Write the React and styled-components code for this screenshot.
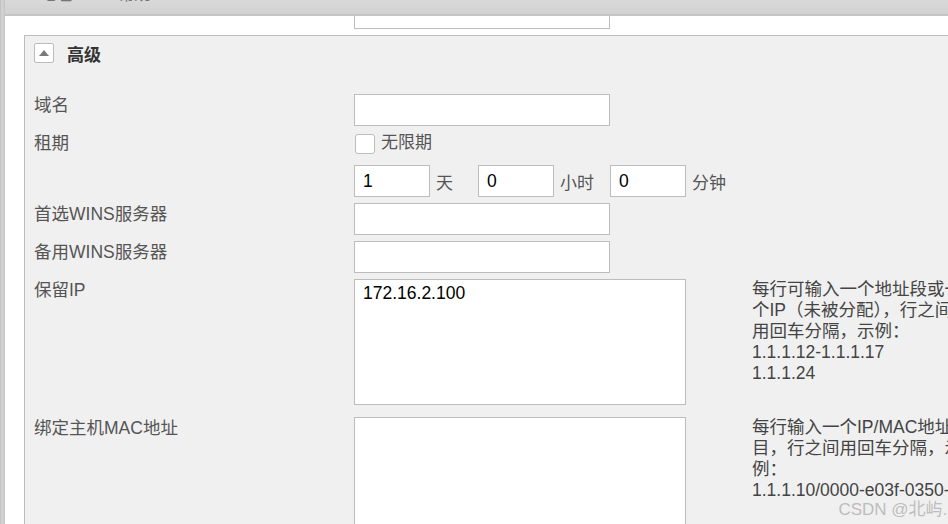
import styled, { createGlobalStyle } from "styled-components";

const GlobalStyle = createGlobalStyle`
  body {
    margin: 0;
    background: #fff;
    font-family: "Liberation Sans", "Noto Sans CJK SC", sans-serif;
  }
`;

const Frame = styled.div`
  width: 948px;
  height: 524px;
  overflow: hidden;
  display: flex;
  position: relative;
  background: #fff;
`;

const Rail = styled.div`
  width: 5px;
  flex-shrink: 0;
  background: linear-gradient(to right, #bdbdbd, #d6d6d6 40%, #c4c4c4);
`;

const Main = styled.div`
  flex: 1;
  display: flex;
  flex-direction: column;
  min-width: 0;

  & > * {
    flex-shrink: 0;
  }
`;

const TopBar = styled.div`
  height: 14px;
  background: linear-gradient(#d9d9d9, #d2d2d2);
  border-bottom: 2px solid #c5c5c5;
  overflow: hidden;
  display: flex;
  gap: 46px;
  padding-left: 20px;
`;

const TabText = styled.span`
  font-size: 16px;
  line-height: 16px;
  margin-top: -13px;
  color: #777;
`;

const Canvas = styled.div`
  display: flex;
  flex-direction: column;
  padding-left: 19px;

  & > * {
    flex-shrink: 0;
  }
`;

const PrevRow = styled.div`
  height: 13px;
  display: flex;
  align-items: flex-end;
  padding-left: 330px;
  overflow: hidden;
`;

const Fieldset = styled.div`
  margin-top: 6px;
  width: 1000px;
  border-top: 1px solid #bdbdbd;
  border-left: 1px solid #bdbdbd;
  background: #f0f0f0;
  padding: 7px 0 0 9px;
`;

const Header = styled.div`
  display: flex;
  align-items: center;
  gap: 13px;
  height: 20px;
  margin-bottom: 31px;
`;

const Toggle = styled.button`
  width: 20px;
  height: 20px;
  padding: 0;
  display: flex;
  align-items: center;
  justify-content: center;
  background: #fff;
  border: 1px solid #bcbcbc;
  border-radius: 2px;
`;

const HeaderTitle = styled.span`
  font-size: 17px;
  font-weight: bold;
  color: #333;
`;

const Row = styled.div`
  display: flex;
  align-items: flex-start;
  margin-bottom: ${(p) => p.$gap ?? 6}px;
  min-height: ${(p) => p.$height ?? 0}px;
`;

const Label = styled.div`
  width: 320px;
  flex-shrink: 0;
  font-size: 17.5px;
  line-height: 22px;
  color: #555;
`;

const Field = styled.div`
  display: flex;
  align-items: center;
`;

const TextInput = styled.input`
  box-sizing: border-box;
  width: ${(p) => p.$width ?? 256}px;
  height: 32px;
  border: 1px solid #bdbdbd;
  background: #fff;
  padding: 0 8px;
  font-family: inherit;
  font-size: 17.5px;
  color: #000;
  outline: none;
`;

const Area = styled.textarea`
  box-sizing: border-box;
  width: 332px;
  height: ${(p) => p.$height}px;
  border: 1px solid #bdbdbd;
  background: #fff;
  padding: 3px 8px;
  font-family: inherit;
  font-size: 17.5px;
  line-height: 21px;
  color: #000;
  resize: none;
  outline: none;
`;

const Check = styled.span`
  box-sizing: border-box;
  width: 20px;
  height: 20px;
  margin: 1px 0 0 1px;
  border: 1px solid #bdbdbd;
  border-radius: 3px;
  background: #fff;
`;

const CheckText = styled.span`
  margin-left: 6px;
  font-size: 17px;
  line-height: 22px;
  color: #555;
`;

const Unit = styled.span`
  width: ${(p) => p.$width}px;
  padding-left: 6px;
  box-sizing: border-box;
  font-size: 17px;
  color: #555;
`;

const Help = styled.div`
  margin-left: 66px;
  font-size: 17.5px;
  line-height: 21px;
  color: #444;
  white-space: nowrap;
`;

const Watermark = styled.div`
  position: absolute;
  right: -4px;
  bottom: 4px;
  font-size: 17px;
  color: #bdbdbd;
  white-space: nowrap;
`;

const UpArrow = () => (
  <svg width="12" height="8" viewBox="0 0 12 8">
    <path d="M6 1 L11 7 L1 7 Z" fill="#7a7a7a" />
  </svg>
);

export default function App() {
  return (
    <>
      <GlobalStyle />
      <Frame>
        <Rail />
        <Main>
          <TopBar>
            <TabText>IP地址</TabText>
            <TabText>常规</TabText>
          </TopBar>
          <Canvas>
            <PrevRow>
              <TextInput />
            </PrevRow>
            <Fieldset>
              <Header>
                <Toggle>
                  <UpArrow />
                </Toggle>
                <HeaderTitle>高级</HeaderTitle>
              </Header>

              <Row>
                <Label>域名</Label>
                <TextInput />
              </Row>

              <Row $height={27}>
                <Label>租期</Label>
                <Field>
                  <Check />
                  <CheckText>无限期</CheckText>
                </Field>
              </Row>

              <Row>
                <Label />
                <Field>
                  <TextInput $width={76} defaultValue="1" />
                  <Unit $width={48}>天</Unit>
                  <TextInput $width={76} defaultValue="0" />
                  <Unit $width={56}>小时</Unit>
                  <TextInput $width={76} defaultValue="0" />
                  <Unit $width={48}>分钟</Unit>
                </Field>
              </Row>

              <Row>
                <Label>首选WINS服务器</Label>
                <TextInput />
              </Row>

              <Row>
                <Label>备用WINS服务器</Label>
                <TextInput />
              </Row>

              <Row $gap={12}>
                <Label>保留IP</Label>
                <Area $height={126} defaultValue="172.16.2.100" />
                <Help>
                  每行可输入一个地址段或一
                  <br />
                  个IP（未被分配），行之间
                  <br />
                  用回车分隔，示例：
                  <br />
                  1.1.1.12-1.1.1.17
                  <br />
                  1.1.1.24
                </Help>
              </Row>

              <Row>
                <Label>绑定主机MAC地址</Label>
                <Area $height={126} />
                <Help>
                  每行输入一个IP/MAC地址条
                  <br />
                  目，行之间用回车分隔，示
                  <br />
                  例：
                  <br />
                  1.1.1.10/0000-e03f-0350-01
                </Help>
              </Row>
            </Fieldset>
          </Canvas>
        </Main>
        <Watermark>CSDN @北屿..</Watermark>
      </Frame>
    </>
  );
}
